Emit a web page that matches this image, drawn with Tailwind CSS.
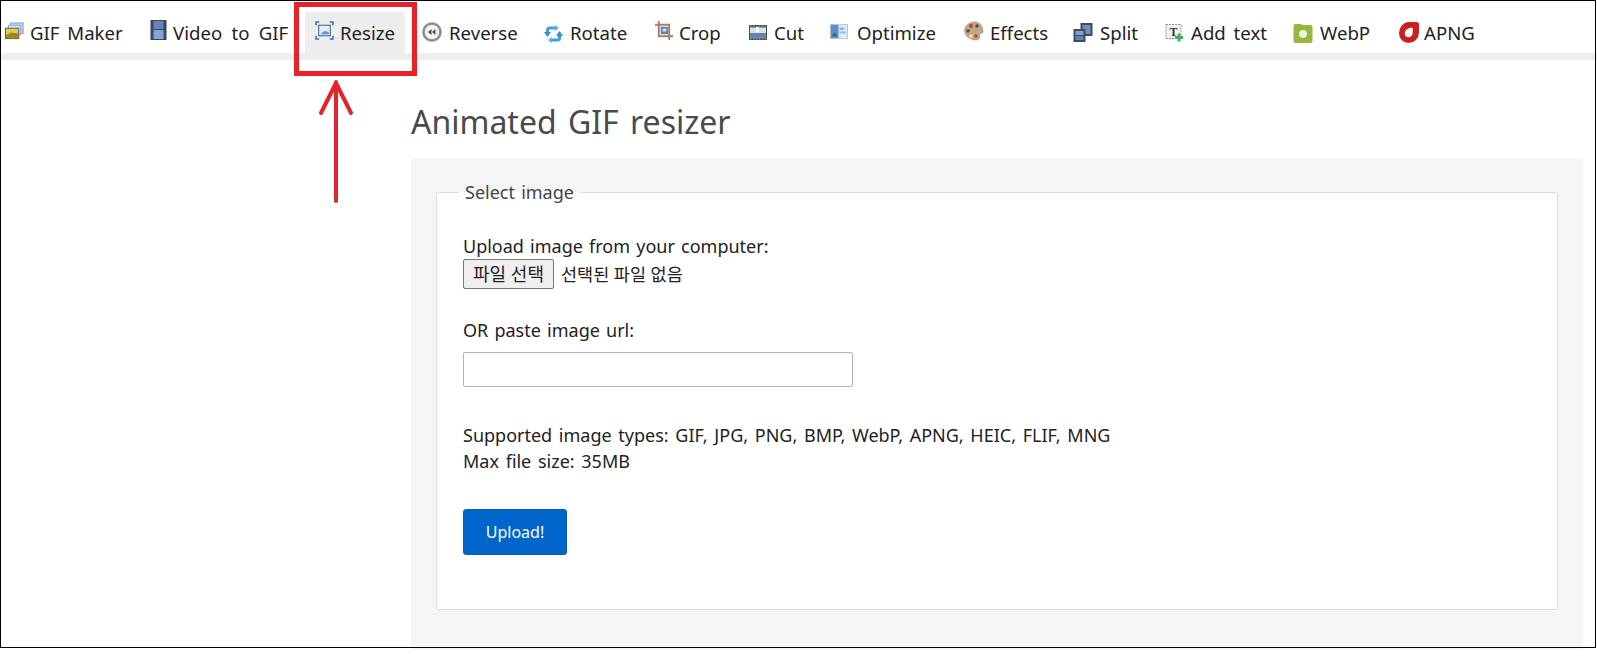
<!DOCTYPE html>
<html lang="en">
<head>
    <meta charset="UTF-8">
    <title>Animated GIF resizer</title>
    <script src="https://cdn.jsdelivr.net/npm/@tailwindcss/browser@4"></script>
</head>
<body class="bg-white font-['Noto_Sans','Noto_Sans_CJK_KR',sans-serif] text-[#222]">
<div class="relative h-[661px] w-[1597px] overflow-hidden">

    <!-- Top nav -->
    <nav class="mt-[1px] flex h-[59px] items-end border-b-[7px] border-[#eee] pl-[5px] text-[18.6px] text-[#222] [word-spacing:3px]">
        <a class="flex h-[41px] w-[145px] items-center gap-[6px]">
            <svg class="mb-[3px] h-[19px] w-[19px] shrink-0" viewBox="0 0 20 20"><rect x="6" y="1" width="13" height="11" fill="#c5d6ea" stroke="#7f9cc0"/><rect x="3.500" y="3.500" width="13" height="10" fill="#dde8f4" stroke="#8fa8c8"/><rect x="0.500" y="6.500" width="14" height="11" fill="#e6c860" stroke="#555"/><path d="M1 14l5-3 8 1v5H1z" fill="#a5831f"/></svg>
            <span>GIF Maker</span>
        </a>
        <a class="flex h-[41px] w-[155px] items-center gap-[6px]">
            <svg class="mb-[5px] h-[20px] w-[17px] shrink-0" viewBox="0 0 16 20"><rect width="16" height="20" fill="#3f4652"/><rect x="3" y="1" width="10" height="8" fill="#5e86b8"/><rect x="3" y="10" width="10" height="9" fill="#7fa5dc"/></svg>
            <span class="[word-spacing:4.500px]">Video to GIF</span>
        </a>
        <a class="flex h-[41px] w-[100px] items-center gap-[6px] rounded-t-[2px] bg-[#eee] pl-[10px]">
            <svg class="mb-[5px] h-[19px] w-[19px] shrink-0" viewBox="0 0 18 18"><path d="M1 4V1h3M14 1h3v3M17 14v3h-3M4 17H1v-3" fill="none" stroke="#3a6fc4" stroke-width="1.500"/><rect x="3.500" y="4" width="11" height="10" fill="#e3ecf7" stroke="#46638f"/><path d="M5 12.500l4-3 4 1v2H5z" fill="#5c93d2"/></svg>
            <span>Resize</span>
        </a>
        <a class="flex h-[41px] w-[139px] items-center gap-[7px] pl-[17px]">
            <svg class="mb-[2px] h-[20px] w-[20px] shrink-0" viewBox="0 0 20 20"><circle cx="10" cy="10" r="8.500" fill="#f4f4f4" stroke="#8c8c8c" stroke-width="2.500"/><path d="M9.500 7v6L6 10zM13.500 7v6L10 10z" fill="#4d4d4d"/></svg>
            <span>Reverse</span>
        </a>
        <a class="flex h-[41px] w-[111px] items-center gap-[7px]">
            <svg class="mt-[2px] h-[18px] w-[19px] shrink-0" viewBox="0 0 19 18"><path d="M3.500 7V5a2 2 0 0 1 2-2H12M15.500 11v2a2 2 0 0 1-2 2H7" fill="none" stroke="#3c9fdf" stroke-width="3"/><path d="M0 7h7L3.500 12zM12 11h7l-3.500-5z" fill="#2f8fd0"/><path d="M11 0l4 3-4 3zM8 12l-4 3 4 3z" fill="#5bb3ea"/></svg>
            <span>Rotate</span>
        </a>
        <a class="flex h-[41px] w-[94px] items-center gap-[6px]">
            <svg class="mb-[4px] h-[21px] w-[18px] shrink-0" viewBox="0 0 19 20"><path d="M4 0v16h15M0 4h15v16" fill="none" stroke="#a9805f" stroke-width="2"/><rect x="6" y="6" width="8" height="8" fill="#5d85ad"/><rect x="8" y="8" width="4" height="3" fill="#cfe0ef"/></svg>
            <span>Crop</span>
        </a>
        <a class="flex h-[41px] w-[81px] items-center gap-[7px]">
            <svg class="mb-[1px] h-[17px] w-[18px] shrink-0" viewBox="0 0 18 15"><rect width="18" height="15" fill="#4b4f55"/><path d="M1 1.200h16M1 13.800h16" stroke="#c9cdd2" stroke-width="0.800" stroke-dasharray="1.500 1.500"/><rect x="1" y="2.500" width="16" height="10" fill="#dde3ea"/><rect x="7" y="2" width="3" height="5" fill="#fff"/><path d="M1 8h16v4.500H1z" fill="#5f83ad"/></svg>
            <span>Cut</span>
        </a>
        <a class="flex h-[41px] w-[134px] items-center gap-[9px]">
            <svg class="mb-[1px] h-[18px] w-[18px] shrink-0" viewBox="0 0 19 19"><rect x="0.500" y="1.500" width="18" height="15" fill="#dfe9f5" stroke="#b5c6da"/><rect x="1" y="2" width="8" height="14" fill="#5b8ed0"/><path d="M2 14l3-4 3 4z" fill="#2c6a5e"/><rect x="10" y="5" width="5" height="2" fill="#7ea7d8"/><rect x="10" y="9" width="7" height="2" fill="#9dbde2"/></svg>
            <span>Optimize</span>
        </a>
        <a class="flex h-[41px] w-[109px] items-center gap-[6px]">
            <svg class="mb-[4px] h-[20px] w-[20px] shrink-0" viewBox="0 0 20 20"><path d="M9 1c6-1 10 4 10 9 0 3-2 2-3 3s1 3-1 5-7 1-10-1C1 15 0 10 1 7c1-3 4-5 8-6z" fill="#c4a77d" stroke="#94846e" stroke-width="0.500"/><circle cx="7" cy="5" r="2" fill="#b8483a"/><circle cx="13" cy="5" r="1.700" fill="#3d4f5f"/><circle cx="4" cy="10" r="1.800" fill="#4a5a48"/><circle cx="7" cy="15" r="1.800" fill="#e9e3d2"/><circle cx="12" cy="15" r="1.800" fill="#c13a3a"/></svg>
            <span>Effects</span>
        </a>
        <a class="flex h-[41px] w-[92px] items-center gap-[7px]">
            <svg class="h-[20px] w-[20px] shrink-0" viewBox="0 0 19 20"><rect x="7" y="0" width="12" height="13" fill="#3f4a5a"/><rect x="9" y="2" width="8" height="9" fill="#6f92bb"/><rect x="0" y="6" width="12" height="13" fill="#3f4a5a"/><rect x="2" y="8" width="8" height="4" fill="#7ea3d0"/><rect x="2" y="13" width="8" height="4" fill="#5b86bb"/></svg>
            <span>Split</span>
        </a>
        <a class="flex h-[41px] w-[128px] items-center gap-[7px]">
            <svg class="h-[20px] w-[19px] shrink-0" viewBox="0 0 19 19"><rect x="1" y="1" width="15" height="14" fill="#f3f5f8" stroke="#8a94a3" stroke-dasharray="2 1"/><text x="8.500" y="12" text-anchor="middle" font-family="Liberation Serif" font-weight="700" font-size="12" fill="#333">T</text><path d="M14 10v8M10 14h8" stroke="#3fb24f" stroke-width="3"/></svg>
            <span>Add text</span>
        </a>
        <a class="flex h-[41px] w-[106px] items-center gap-[7px]">
            <svg class="mt-[2px] h-[19px] w-[20px] shrink-0" viewBox="0 0 19 19"><path d="M2 0h5l2 1h8a2 2 0 0 1 2 2v14a2 2 0 0 1-2 2H2a2 2 0 0 1-2-2V2a2 2 0 0 1 2-2z" fill="#95b740"/><circle cx="9.500" cy="10" r="4" fill="#edf2dc"/></svg>
            <span>WebP</span>
        </a>
        <a class="flex h-[41px] items-center gap-[5px]">
            <svg class="h-[21px] w-[20px] shrink-0" viewBox="0 0 19 20"><path d="M8 0h9a2 2 0 0 1 2 2v8a10 10 0 0 1-10 10A9 9 0 0 1 0 11a11 11 0 0 1 8-11z" fill="#cc1f1f"/><path d="M13 5.500v5a4 4 0 0 1-4 4 3.500 3.500 0 0 1-3.500-3.500C5.500 8 8 5.500 13 5.500z" fill="#fff"/></svg>
            <span>APNG</span>
        </a>
    </nav>

    <!-- Main -->
    <main class="ml-[411px] w-[1172px]">
        <h1 class="mt-[37px] mb-[11px] text-[32px] leading-[50px] text-[#4a4a4a] [word-spacing:3px]">Animated GIF resizer</h1>
        <section class="h-[492px] bg-[#f4f5f7] px-[25px] pt-[21px]">
            <fieldset class="h-[431px] rounded-[2px] border border-[#ddd] bg-white px-[26px] text-[18px] leading-[26px] [word-spacing:1.500px]">
                <legend class="ml-[-4px] px-[6px] text-[#444]">Select image</legend>
                <div class="mt-[28px]">Upload image from your computer:</div>
                <div class="flex items-center [word-spacing:0px]">
                    <button class="h-[30px] w-[91px] rounded-[2px] border border-[#777] bg-[#efefef]">파일 선택</button>
                    <span class="ml-[7px] text-[17.500px]">선택된 파일 없음</span>
                </div>
                <div class="mt-[28px]">OR paste image url:</div>
                <input type="text" class="mt-[9px] block h-[35px] w-[390px] rounded-[2px] border border-[#b5b5b5] bg-white">
                <div class="mt-[35px] [word-spacing:2px]">
                    Supported image types: GIF, JPG, PNG, BMP, WebP, APNG, HEIC, FLIF, MNG<br>
                    Max file size: 35MB
                </div>
                <button class="mt-[35px] h-[46px] w-[104px] rounded-[3px] border border-[#0b5cb0] bg-[#0066cc] text-[16px] text-white">Upload!</button>
            </fieldset>
        </section>
    </main>

    <!-- Screenshot annotations -->
    <div class="pointer-events-none absolute top-0 left-0 h-[648px] w-[1596px] border border-black"></div>
    <div class="pointer-events-none absolute top-[2px] left-[294px] h-[74px] w-[123px] border-[5px] border-[#e8212b]"></div>
    <svg class="pointer-events-none absolute top-[79px] left-[318px] h-[128px] w-[38px]" viewBox="0 0 38 128">
        <path d="M18 3V122M3 34L18 4L33 34" fill="none" stroke="#e8212b" stroke-width="4" stroke-linecap="round" stroke-linejoin="round"/>
    </svg>
</div>
</body>
</html>
